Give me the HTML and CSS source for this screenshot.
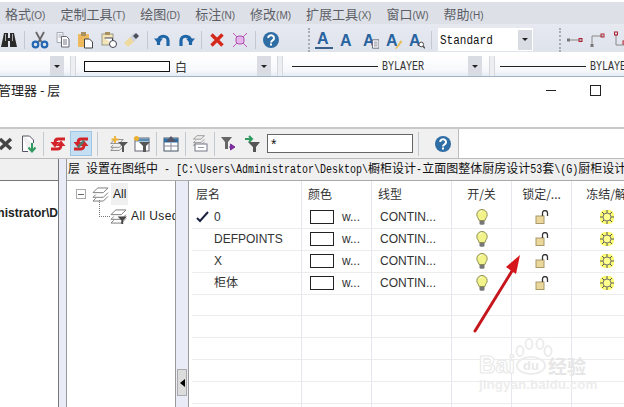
FILE: index.html
```html
<!DOCTYPE html>
<html lang="zh">
<head>
    <meta charset="UTF-8">
    <meta name="viewport" content="width=device-width, initial-scale=1.0">
    <title>图层特性管理器</title>
    <link rel="stylesheet" href="styles.css">
</head>
<body>
    <svg class="defs">
        <symbol id="bulb" viewBox="0 0 12 16"><path d="M6 .5a5.200 5.200 0 0 0-5.200 5.200c0 2.300 1.900 3.500 2.300 5.800h5.800c.4-2.300 2.300-3.500 2.300-5.800A5.200 5.200 0 0 0 6 .5z" fill="#f3f38c" stroke="#8d8d50"/><path d="M3.500 3.500A3 3 0 0 1 6 2" fill="none" stroke="#fff"/><path d="M3.500 12h5v3l-1 .8h-3l-1-.8z" fill="#777"/></symbol>
        <symbol id="lock" viewBox="0 0 14 14"><rect x="1" y="6" width="8" height="7.500" fill="#ecd79a" stroke="#a8986a"/><path d="M7.500 6V3a2.500 2.500 0 0 1 5 0v3" fill="none" stroke="#333" stroke-width="1.300"/></symbol>
        <symbol id="sun" viewBox="0 0 16 16"><rect x="1" y="1" width="14" height="14" rx="5" fill="#fbfb70"/><path d="M8 1v3M8 12v3M1 8h3M12 8h3M3 3l2 2M11 11l2 2M3 13l2-2M11 5l2-2" stroke="#555"/><circle cx="8" cy="8" r="4" fill="#ffff8c" stroke="#777"/></symbol>
        <symbol id="help" viewBox="0 0 18 18"><circle cx="9" cy="9" r="8" fill="#2f6ea5"/><path d="M6.200 7a2.900 2.700 0 1 1 4.400 2.300C9.500 10 9 10.400 9 11.500" fill="none" stroke="#fff" stroke-width="2"/><rect x="8" y="12.500" width="2" height="2" fill="#fff"/></symbol>
        <symbol id="layers" viewBox="0 0 18 16"><path d="M6 1h11l-5 5H1zM4 8l-3 3h11l5-5M4 12l-3 3h11l5-5" fill="none" stroke="#777"/></symbol>
        <symbol id="sync" viewBox="0 0 18 18"><path d="M16 4H9C7 4 6 5 6 8M2 14h7c2 0 3-1 3-4" fill="none" stroke="#d3242a" stroke-width="2.800"/><path d="M1.500 7h9L6 12.500zM16.500 11h-9L12 5.500z" fill="#d3242a"/></symbol>
    </svg>

    <nav class="menubar">
        <span class="menu">格式<small>(O)</small></span>
        <span class="menu">定制工具<small>(T)</small></span>
        <span class="menu">绘图<small>(D)</small></span>
        <span class="menu">标注<small>(N)</small></span>
        <span class="menu">修改<small>(M)</small></span>
        <span class="menu">扩展工具<small>(X)</small></span>
        <span class="menu">窗口<small>(W)</small></span>
        <span class="menu">帮助<small>(H)</small></span>
    </nav>

    <div class="toolbar">
        <svg class="icon" viewBox="0 0 18 18"><path d="M4 2h4v5h2V2h4l1 5 2 9h-7V10H8v6H1l2-9z" fill="#2a2a2a"/><path d="M5.500 3v7M12.500 3v7" stroke="#aaa"/></svg>
        <i class="sep"></i>
        <svg class="icon" viewBox="0 0 18 18"><path d="M5 1l5.500 10M13 1L7.500 11" stroke="#666" stroke-width="1.800"/><circle cx="4.500" cy="13.500" r="2.800" fill="none" stroke="#2468b4" stroke-width="2.200"/><circle cx="13.500" cy="13.500" r="2.800" fill="none" stroke="#2468b4" stroke-width="2.200"/></svg>
        <svg class="icon" viewBox="0 0 18 18"><path d="M3 1.500h6v10H3z" fill="#f4f6fa" stroke="#a6aab4"/><path d="M4.500 4h3M4.500 6h3" stroke="#a6aab4"/><path d="M7.500 5.500h5l2.500 2.500v8H7.500z" fill="#fff" stroke="#667"/><path d="M9 9h4M9 11h4M9 13h4" stroke="#778"/></svg>
        <svg class="icon" viewBox="0 0 18 18"><rect x="1" y="3" width="11" height="13" rx="1" fill="#eeb95c"/><rect x="4" y="1" width="5" height="4" fill="#a89060"/><path d="M7.500 8h5l3 3v6h-8z" fill="#fff" stroke="#444"/></svg>
        <svg class="icon" viewBox="0 0 18 18"><rect x="2" y="3" width="11" height="11" fill="#f3e4b8" stroke="#998"/><rect x="5" y="1" width="5" height="3" fill="#a89060"/><path d="M4.500 7h8v6" fill="#fff" stroke="#445"/><circle cx="13" cy="13" r="3.500" fill="#fff" stroke="#445"/></svg>
        <svg class="icon" viewBox="0 0 18 18"><path d="M1 12l6-6 4 5-6 5z" fill="#eed9a0"/><path d="M7 6l4-4 4 4-4 5z" fill="#cfd2da"/><path d="M10 5l3-3 3 3-3 3z" fill="#4a4e5a"/></svg>
        <i class="sep"></i>
        <svg class="icon" viewBox="0 0 18 18"><path d="M4.500 14V9.500a4.700 4.200 0 0 1 9.500 0V15" fill="none" stroke="#1f66a8" stroke-width="3.200"/><path d="M0 7.500h9L4.500 13z" fill="#1f66a8"/></svg>
        <svg class="icon" viewBox="0 0 18 18"><path d="M13.500 14V9.500A4.700 4.200 0 0 0 4 9.500V15" fill="none" stroke="#1f66a8" stroke-width="3.200"/><path d="M18 7.500H9l4.500 5.500z" fill="#1f66a8"/></svg>
        <i class="sep"></i>
        <svg class="icon" viewBox="0 0 18 18"><path d="M3.500 3.500l11 11M14.500 3.500l-11 11" stroke="#d5281c" stroke-width="3.400"/></svg>
        <svg class="icon" viewBox="0 0 18 18"><path d="M2 2l14 14M16 2L2 16" stroke="#c64fb8"/><rect x="5" y="5" width="8" height="8" rx="3" fill="#e8b4ec" stroke="#a850b0"/></svg>
        <i class="sep"></i>
        <svg class="icon"><use href="#help"/></svg>
        <i class="grip grip-a"></i>
        <span class="text-btn under">A</span>
        <span class="text-btn">A</span>
        <span class="text-btn">A<svg class="badge" viewBox="0 0 8 10"><path d="M.5.5h7v9h-7z" fill="#fff" stroke="#667"/><path d="M2 3h4M2 5h4M2 7h4" stroke="#889"/></svg></span>
        <span class="text-btn">A<svg class="badge" viewBox="0 0 8 10"><path d="M0 10l6-9 2 1.500L2 10z" fill="#e8c060"/></svg></span>
        <span class="text-btn">A<svg class="badge" viewBox="0 0 8 10"><circle cx="3.500" cy="5.500" r="2.500" fill="#fff" stroke="#444"/><path d="M5.500 7.500l2 2" stroke="#444" stroke-width="1.500"/></svg></span>
        <i class="sep"></i>
        <div class="style-box"><span class="mono">Standard</span><span class="drop"></span></div>
        <i class="grip grip-b"></i>
        <svg class="icon" viewBox="0 0 18 18"><path d="M2 9h14" stroke="#888"/><rect x="1" y="7.500" width="3" height="3" fill="#777"/><rect x="13" y="7.500" width="3" height="3" fill="none" stroke="#b02030"/></svg>
        <svg class="icon" viewBox="0 0 18 18"><path d="M3 15V5h11" fill="none" stroke="#888"/><rect x="1.500" y="13" width="3" height="3" fill="#777"/><rect x="12" y="3" width="3" height="3" fill="none" stroke="#b02030"/></svg>
        <svg class="icon" viewBox="0 0 18 18"><path d="M4 3v11h10" fill="none" stroke="#888"/><rect x="2.500" y="1" width="3" height="3" fill="none" stroke="#b02030"/><rect x="11" y="10" width="3" height="3" fill="none" stroke="#b02030"/></svg>
    </div>

    <div class="propbar">
        <div class="combo combo-first"><span class="drop"></span></div>
        <i class="handle handle-first"></i>
        <div class="combo combo-color"><span class="swatch-wide"></span><span class="cjk">白</span><span class="drop"></span></div>
        <i class="handle"></i>
        <div class="combo combo-line"><span class="rule"></span><span class="bylayer"><span class="mono">BYLAYER</span></span><span class="drop"></span></div>
        <i class="handle"></i>
        <div class="combo combo-last"><span class="rule"></span><span class="bylayer"><span class="mono">BYLAYER</span></span></div>
    </div>

    <header class="dialog-head">
        <span class="dialog-title">管理器 - 层</span>
        <i class="win-min"></i>
        <i class="win-max"></i>
    </header>

    <div class="layerbar">
        <div class="layer-tools">
            <svg class="icon cut" viewBox="0 0 18 18"><path d="M3 4l11 10M14 4L3 14" stroke="#444" stroke-width="3.400"/></svg>
            <svg class="icon" viewBox="0 0 18 18"><path d="M2.500 1h7l4 4v3M8 16.500H2.500V1" fill="#fff" stroke="#556"/><path d="M12 8v7M8.500 12.500l3.500 4 3.500-4" fill="none" stroke="#2f9a60" stroke-width="2"/></svg>
            <i class="sep"></i>
            <svg class="icon"><use href="#sync"/></svg>
            <span class="active-btn"><svg class="icon"><use href="#sync"/><path d="M6 12.500L12 5.500" stroke="#4f7f6c" stroke-width="2.400"/></svg></span>
            <i class="sep"></i>
            <svg class="icon push" viewBox="0 0 18 18"><use href="#layers" width="14" height="14" y="3"/><path d="M8 7h10l-4 4v6h-2v-6z" fill="#555"/><path d="M5 1v7M1.500 4.500h7" stroke="#eeb030" stroke-width="1.800"/></svg>
            <svg class="icon" viewBox="0 0 18 18"><rect x="2" y="3" width="14" height="13" fill="#fff" stroke="#667"/><path d="M2 5h14" stroke="#5a8ab0" stroke-width="3"/><path d="M6 7h11l-4 4v6h-3v-6z" fill="#555"/><circle cx="3.500" cy="3.500" r="2.500" fill="#eeb030"/></svg>
            <i class="sep"></i>
            <svg class="icon" viewBox="0 0 18 18"><rect x="2" y="3" width="14" height="13" fill="#fff" stroke="#456"/><path d="M2 5.500h14" stroke="#2f6ea5" stroke-width="4"/><path d="M9 1l5 6H4z" fill="#556"/><path d="M9 8v8M2 11h14" stroke="#889"/></svg>
            <i class="sep"></i>
            <svg class="icon" viewBox="0 0 18 18"><use href="#layers" width="16" height="11"/><rect x="4" y="9" width="12" height="7" fill="#fff" stroke="#778"/><path d="M7 12.500h6" stroke="#99a"/></svg>
            <i class="sep"></i>
            <svg class="icon" viewBox="0 0 18 18"><path d="M1 2h11L8 7v7H5V7z" fill="#666"/><path d="M10.500 9l4.500 3-4.500 3zM9 12h3" fill="#7a2f9a" stroke="#7a2f9a"/></svg>
            <svg class="icon" viewBox="0 0 18 18"><path d="M5 7h12l-4 5v5h-3v-5z" fill="#555"/><path d="M6 1l3 3-3 3M9 4H2" fill="none" stroke="#2f9a60" stroke-width="2"/></svg>
            <div class="filter-box">*</div>
            <i class="sep"></i>
            <svg class="icon help-btn"><use href="#help"/></svg>
        </div>
    </div>

    <div class="workspace">
        <aside class="drawing-list">
            <div class="drawing-head"></div>
            <div class="drawing-body"><b>C:\Users\Administrator\D</b></div>
        </aside>
        <div class="left-sash"></div>
        <section class="layer-panel">
            <div class="path-line">层<span class="mono"> </span>设置在图纸中<span class="mono"> - [C:\Users\Administrator\Desktop\</span>橱柜设计<span class="mono">-</span>立面图整体厨房设计<span class="mono">53</span>套<span class="mono">\(G)</span>厨柜设计</div>
            <div class="panel-body">
                <div class="filter-tree">
                    <div class="tree-row">
                        <span class="minus"></span><svg class="tree-icon"><use href="#layers"/></svg><span class="tree-label">All</span>
                    </div>
                    <div class="tree-child">
                        <span class="dots"></span><svg class="tree-icon" viewBox="0 0 18 16"><use href="#layers"/><path d="M8 8h10l-4 4v4h-2v-4z" fill="#444"/></svg><span class="used">All Used Layers</span>
                    </div>
                </div>
                <div class="tree-sash"><span class="collapse"></span></div>
                <div class="layer-table">
                    <div class="row head">
                        <div class="cell first">层名</div><div class="cell">颜色</div><div class="cell">线型</div><div class="cell mid">开/关</div><div class="cell mid">锁定/...</div><div class="cell mid">冻结/解</div>
                    </div>
                    <div class="row">
                        <div class="cell name"><svg class="check" viewBox="0 0 14 12"><path d="M1 7l3 3 8-9" fill="none" stroke="#1c2440" stroke-width="2"/></svg>0</div>
                        <div class="cell color"><span class="swatch"></span>w...</div><div class="cell linetype">CONTIN...</div>
                        <div class="cell mid"><svg class="bulb"><use href="#bulb"/></svg></div><div class="cell mid"><svg class="lock"><use href="#lock"/></svg></div><div class="cell mid"><svg class="sun"><use href="#sun"/></svg></div>
                    </div>
                    <div class="row">
                        <div class="cell name">DEFPOINTS</div>
                        <div class="cell color"><span class="swatch"></span>w...</div><div class="cell linetype">CONTIN...</div>
                        <div class="cell mid"><svg class="bulb"><use href="#bulb"/></svg></div><div class="cell mid"><svg class="lock"><use href="#lock"/></svg></div><div class="cell mid"><svg class="sun"><use href="#sun"/></svg></div>
                    </div>
                    <div class="row">
                        <div class="cell name">X</div>
                        <div class="cell color"><span class="swatch"></span>w...</div><div class="cell linetype">CONTIN...</div>
                        <div class="cell mid"><svg class="bulb"><use href="#bulb"/></svg></div><div class="cell mid"><svg class="lock"><use href="#lock"/></svg></div><div class="cell mid"><svg class="sun"><use href="#sun"/></svg></div>
                    </div>
                    <div class="row">
                        <div class="cell name">柜体</div>
                        <div class="cell color"><span class="swatch"></span>w...</div><div class="cell linetype">CONTIN...</div>
                        <div class="cell mid"><svg class="bulb"><use href="#bulb"/></svg></div><div class="cell mid"><svg class="lock"><use href="#lock"/></svg></div><div class="cell mid"><svg class="sun"><use href="#sun"/></svg></div>
                    </div>
                    <div class="row"><div class="cell"></div><div class="cell"></div><div class="cell"></div><div class="cell"></div><div class="cell"></div><div class="cell"></div></div>
                    <div class="row"><div class="cell"></div><div class="cell"></div><div class="cell"></div><div class="cell"></div><div class="cell"></div><div class="cell"></div></div>
                    <div class="row"><div class="cell"></div><div class="cell"></div><div class="cell"></div><div class="cell"></div><div class="cell"></div><div class="cell"></div></div>
                    <div class="row"><div class="cell"></div><div class="cell"></div><div class="cell"></div><div class="cell"></div><div class="cell"></div><div class="cell"></div></div>
                    <div class="row"><div class="cell"></div><div class="cell"></div><div class="cell"></div><div class="cell"></div><div class="cell"></div><div class="cell"></div></div>
                    <div class="row"><div class="cell"></div><div class="cell"></div><div class="cell"></div><div class="cell"></div><div class="cell"></div><div class="cell"></div></div>
                </div>
            </div>
        </section>
    </div>

    <!-- red arrow drawn on top of the screenshot -->
    <svg class="arrow" viewBox="0 0 60 90"><path d="M5 86L42 26" stroke="#c5161d" stroke-width="3" stroke-linecap="round"/><path d="M50 10L46 29 36 22z" fill="#d5161d"/></svg>

    <div class="watermark">
        <svg class="paw" viewBox="0 0 38 20"><g fill="none" stroke="#ececec" stroke-width="2"><ellipse cx="5" cy="13" rx="3.500" ry="5"/><ellipse cx="14" cy="6" rx="3.500" ry="5"/><ellipse cx="25" cy="6" rx="3.500" ry="5"/><ellipse cx="33" cy="13" rx="3.500" ry="5"/></g></svg>
        <div class="mark-main"><span class="mark-bai">Bai</span><span class="mark-du">du</span><span class="mark-cn">经验</span></div>
        <div class="mark-url">jingyan.baidu.com</div>
    </div>
</body>
</html>
```

FILE: styles.css
```css
* {
    box-sizing: border-box;
}
body {
    position: relative;
    width: 624px;
    height: 407px;
    margin: 0;
    overflow: hidden;
    background: #fff;
    color: #222;
    font-family: "Liberation Sans", "Noto Sans CJK SC", sans-serif;
    font-size: 12px;
}
i {
    display: block;
    flex: none;
}
.defs {
    display: none;
}
.icon {
    flex: none;
    width: 18px;
    height: 18px;
}
/* tall narrow latin, like the bitmap font of the cad program */
.mono {
    display: inline-block;
    font-family: "Liberation Mono", monospace;
    font-size: 10px;
    line-height: 12px;
    white-space: pre;
    transform: scaleY(1.2);
}

/* top of the cad window */
.menubar {
    display: flex;
    align-items: center;
    height: 22px;
    margin-top: 2px;
    padding-left: 5px;
    background: #dde0e7;
    color: #5c5f66;
    font-family: "Noto Sans CJK SC", sans-serif;
    font-size: 13px;
}
.menu {
    margin-right: 15px;
    white-space: nowrap;
}
.menu small {
    font-family: "Liberation Sans", sans-serif;
    font-size: 10px;
}
.toolbar {
    display: flex;
    align-items: center;
    gap: 5px;
    height: 28px;
    padding-top: 3px;
    background: linear-gradient(#e6e9f0, #dfe3ec);
    overflow: hidden;
}
.sep {
    width: 1px;
    height: 18px;
    margin: 0 1px;
    background: #c4c8d0;
}
.grip {
    width: 2px;
    height: 24px;
    border-left: 2px dotted #a8acb4;
}
.grip-a {
    margin-left: 23px;
}
.grip-b {
    margin-left: 21px;
}
.text-btn {
    display: flex;
    flex: none;
    align-items: flex-end;
    width: 18px;
    height: 18px;
    padding-left: 2px;
    color: #27639f;
    font-size: 16px;
    font-weight: bold;
    line-height: 16px;
}
.under {
    border-bottom: 2px solid #3a5f8a;
}
.badge {
    width: 8px;
    height: 10px;
    margin-left: -3px;
}
.style-box {
    display: flex;
    flex: none;
    align-items: center;
    justify-content: space-between;
    width: 95px;
    height: 23px;
    padding: 0 1px 0 2px;
    background: #fff;
    color: #111;
}
.style-box .mono {
    font-size: 11px;
}
.drop {
    display: flex;
    flex: none;
    align-items: center;
    justify-content: center;
    width: 14px;
    height: 20px;
    background: #d9dce3;
}
.drop::after {
    content: "";
    border-top: 3px solid #222;
    border-right: 3px solid transparent;
    border-left: 3px solid transparent;
}
.propbar {
    display: flex;
    align-items: center;
    height: 21px;
    margin-top: 4px;
    border-bottom: 1px solid #9db4c8;
    background: linear-gradient(#fff, #f6f8fb 70%, #e6ebf2);
}
.handle {
    width: 6px;
    height: 20px;
    margin: 0 5px 0 6px;
    border-left: 1px solid #d5d8de;
    border-right: 1px solid #d5d8de;
    background: #eceef2;
}
.handle-first {
    margin-right: 1px;
}
.combo {
    display: flex;
    flex: none;
    align-items: center;
    height: 20px;
}
.combo-first {
    justify-content: flex-end;
    width: 64px;
}
.combo-color {
    width: 194px;
    padding-left: 7px;
}
.swatch-wide {
    width: 86px;
    height: 11px;
    margin-right: 5px;
    border: 1px solid #111;
    background: #fff;
}
.cjk {
    flex: 1;
    color: #333;
}
.combo-line {
    width: 195px;
    padding: 0 1px 0 4px;
}
.combo-last {
    flex: 1;
    overflow: hidden;
}
.rule {
    flex: none;
    width: 86px;
    height: 1px;
    margin-right: 4px;
    background: #222;
}
.bylayer {
    flex: 1;
    color: #333;
    white-space: nowrap;
}

/* dialog */
.dialog-head {
    display: flex;
    height: 50px;
    padding-top: 5px;
}
.dialog-title {
    width: 548px;
    margin-left: -2px;
    color: #222;
    font-family: "Noto Sans CJK SC", sans-serif;
    font-size: 13px;
    line-height: 16px;
}
.win-min {
    width: 10px;
    height: 1px;
    margin-top: 8px;
    background: #222;
}
.win-max {
    width: 11px;
    height: 11px;
    margin: 3px 0 0 34px;
    border: 1px solid #222;
}
.layerbar {
    height: 31px;
    border-top: 2px solid #c8c8c8;
}
.layer-tools {
    display: flex;
    align-items: center;
    gap: 5px;
    width: 459px;
    height: 100%;
    border-right: 1px solid #bbb;
    background: #f0f0f0;
    overflow: hidden;
}
.layer-tools .sep {
    margin: 0;
    height: 24px;
}
.cut {
    margin-left: -3px;
}
.active-btn {
    display: flex;
    flex: none;
    align-items: center;
    justify-content: center;
    width: 22px;
    height: 25px;
    margin-left: -2px;
    border: 1px solid #9fc6e4;
    background: #c5dff2;
}
.push {
    margin-left: 7px;
}
.filter-box {
    flex: none;
    width: 146px;
    height: 19px;
    margin-left: 1px;
    padding-left: 3px;
    border: 1px solid #666;
    background: #fff;
    color: #111;
    font-size: 14px;
    line-height: 18px;
}
.help-btn {
    margin-left: 10px;
}

.workspace {
    display: grid;
    grid-template-columns: 58px 9px 1fr;
    height: 249px;
    border-top: 1px solid #bbb;
}
.drawing-list {
    display: flex;
    flex-direction: column;
    min-width: 0;
}
.drawing-head {
    height: 22px;
    border-bottom: 1px solid #777;
    background: #f0f0f0;
}
.drawing-body {
    display: flex;
    justify-content: flex-end;
    flex: 1;
    padding-top: 25px;
    overflow: hidden;
    white-space: nowrap;
    line-height: 14px;
}
.left-sash {
    border-left: 1px solid #777;
    border-right: 1px solid #999;
    background: #e9ecf6;
}
.layer-panel {
    display: flex;
    flex-direction: column;
    min-width: 0;
    min-height: 0;
}
.path-line {
    flex: none;
    height: 22px;
    padding-left: 1px;
    border-bottom: 1px solid #aaa;
    background: #f0f0f0;
    color: #111;
    font-family: "Noto Sans CJK SC", sans-serif;
    line-height: 18px;
    overflow: hidden;
    white-space: pre;
}
.panel-body {
    display: grid;
    grid-template-columns: 108px 14px 1fr;
    grid-template-rows: minmax(0, 1fr);
    flex: 1;
    min-height: 0;
}
.filter-tree {
    padding: 2px 0 0 9px;
    overflow: hidden;
}
.tree-row {
    display: flex;
    align-items: center;
    height: 22px;
}
.minus {
    width: 10px;
    height: 10px;
    margin-right: 6px;
    border: 1px solid #aaa;
}
.minus::after {
    content: "";
    display: block;
    width: 6px;
    height: 1px;
    margin: 3.500px 1px;
    background: #666;
}
.tree-icon {
    flex: none;
    width: 17px;
    height: 15px;
}
.tree-label {
    margin-left: 2px;
    padding: 4px 2px;
    background: #f0f0f0;
    line-height: 14px;
}
.tree-child {
    display: flex;
    align-items: center;
    width: 130px;
    height: 22px;
    margin-left: 23px;
    white-space: nowrap;
}
.dots {
    flex: none;
    width: 11px;
    height: 17px;
    margin-top: -17px;
    border-left: 1px dotted #777;
    border-bottom: 1px dotted #777;
    transform: translateY(1px);
}
.used {
    margin-left: 4px;
    letter-spacing: 0.4px;
}
.tree-sash {
    display: flex;
    flex-direction: column;
    justify-content: flex-end;
    padding: 0 1px 11px 1px;
    border-left: 1px solid #999;
    border-right: 1px solid #999;
    background: #e9ecf6;
}
.collapse {
    display: flex;
    align-items: center;
    justify-content: center;
    height: 27px;
    border: 1px solid #aaa;
    background: #dcdcdc;
}
.collapse::after {
    content: "";
    border-top: 4px solid transparent;
    border-bottom: 4px solid transparent;
    border-right: 5px solid #000;
}
.layer-table {
    padding-left: 3px;
    overflow: hidden;
}
.row {
    display: grid;
    grid-template-columns: 110px 70px 80px 60px 60px 70px;
    height: 22px;
    color: #333;
    line-height: 22px;
}
.head {
    height: 25px;
    color: #333;
    font-family: "Noto Sans CJK SC", sans-serif;
    line-height: 26px;
}
.cell {
    display: flex;
    align-items: center;
    min-width: 0;
    padding-left: 6px;
    border-right: 1px solid #e6e6ee;
    border-bottom: 1px solid #ececec;
    font-size: 12px;
    white-space: nowrap;
}
.head .cell {
    border-bottom-color: #fff;
}
.first {
    padding-left: 4px;
}
.mid {
    justify-content: center;
    padding-left: 0;
}
.name {
    padding-left: 22px;
}
.check {
    flex: none;
    width: 14px;
    height: 12px;
    margin: 0 4px 0 -18px;
}
.color {
    padding-left: 8px;
}
.linetype {
    padding-left: 8px;
}
.swatch {
    flex: none;
    width: 24px;
    height: 14px;
    margin-right: 8px;
    border: 1px solid #222;
    background: #fff;
}
.bulb {
    width: 12px;
    height: 16px;
}
.lock {
    width: 14px;
    height: 14px;
}
.sun {
    width: 16px;
    height: 16px;
}

/* things lying over the screenshot */
.arrow {
    position: absolute;
    left: 470px;
    top: 245px;
    width: 60px;
    height: 90px;
}
.watermark {
    position: absolute;
    left: 479px;
    top: 338px;
    width: 112px;
}
.paw {
    display: block;
    width: 38px;
    height: 20px;
    margin-left: 36px;
}
.mark-main {
    display: flex;
    align-items: center;
    height: 19px;
    margin-top: -2px;
    color: #fff;
}
.mark-bai {
    width: 37px;
    font-size: 23px;
    font-weight: bold;
    -webkit-text-stroke: 1px #e8e8e8;
}
.mark-du {
    width: 30px;
    height: 19px;
    border: 2px solid #ececec;
    border-radius: 50%;
    color: #e8e8e8;
    font-size: 13px;
    font-weight: bold;
    line-height: 15px;
    text-align: center;
}
.mark-cn {
    margin-left: 2px;
    color: #e6e6e6;
    font-family: "Noto Sans CJK SC", sans-serif;
    font-size: 19px;
    font-weight: bold;
    white-space: nowrap;
}
.mark-url {
    margin-top: 3px;
    color: #ededed;
    font-size: 13.500px;
    font-weight: bold;
    line-height: 14px;
    white-space: nowrap;
}
```
